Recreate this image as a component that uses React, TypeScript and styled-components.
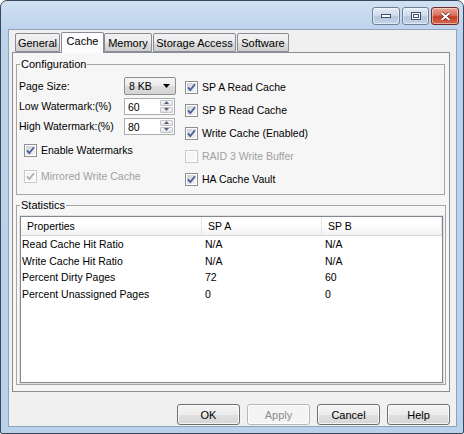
import styled, { createGlobalStyle } from "styled-components";

const GlobalStyle = createGlobalStyle`
  html, body {
    margin: 0;
    padding: 0;
    background: #ffffff;
  }
  * {
    box-sizing: border-box;
  }
`;

const Window = styled.div`
  width: 464px;
  height: 434px;
  display: flex;
  flex-direction: column;
  border: 1px solid #37475c;
  border-radius: 7px 7px 2px 2px;
  background: linear-gradient(180deg, #d0e0f2 0px, #bcd3ec 30px, #b9d1ea 100%);
  font-family: "Liberation Sans", Arial, sans-serif;
  font-size: 10.5px;
  color: #000;
  overflow: hidden;
`;

const TitleBar = styled.div`
  height: 28px;
  display: flex;
  justify-content: flex-end;
  align-items: flex-start;
  padding: 6px 4px 0 0;
`;

const TitleButton = styled.div<{ $close?: boolean; $w: number }>`
  width: ${(p) => p.$w}px;
  height: 18px;
  margin-left: 2px;
  display: flex;
  align-items: center;
  justify-content: center;
  border: 1px solid ${(p) => (p.$close ? "#6d2a26" : "#6f7f96")};
  border-radius: 3px;
  background: ${(p) =>
    p.$close
      ? "linear-gradient(180deg, #eba595 0%, #d8705c 45%, #c43c24 55%, #d86a50 100%)"
      : "linear-gradient(180deg, #e6eef8 0%, #cfdcec 45%, #b4c6dd 55%, #c7d6e9 100%)"};
  box-shadow: inset 0 0 0 1px rgba(255, 255, 255, 0.45);
`;

const Client = styled.div`
  flex: 1;
  margin: 0 6px 6px 7px;
  background: #f0f0f0;
  border: 1px solid #8ea3bc;
  display: flex;
  flex-direction: column;
  padding: 1px 6px 0 3px;
`;

const TabStrip = styled.div`
  display: flex;
  align-items: flex-end;
  height: 21px;
  padding-left: 3px;
  position: relative;
  z-index: 1;
`;

const Tab = styled.div<{ $active?: boolean; $w: number }>`
  width: ${(p) => p.$w}px;
  height: ${(p) => (p.$active ? 21 : 19)}px;
  margin-bottom: ${(p) => (p.$active ? -1 : 0)}px;
  margin-right: ${(p) => (p.$active ? 0 : 1)}px;
  padding-top: ${(p) => (p.$active ? 2 : 3)}px;
  text-align: center;
  border: 1px solid #898c95;
  border-bottom: ${(p) => (p.$active ? "none" : "1px solid #898c95")};
  border-radius: 2px 2px 0 0;
  background: ${(p) =>
    p.$active
      ? "#fcfcfe"
      : "linear-gradient(180deg, #f2f2f2 0%, #ebebeb 50%, #dddddd 51%, #cfcfcf 100%)"};
  font-size: 11px;
  white-space: nowrap;
`;

const Panel = styled.div`
  height: 340px;
  border: 1px solid #898c95;
  background: #f6f6f6;
  padding: 5px 4px 0 3px;
  display: flex;
  flex-direction: column;
`;

const Group = styled.fieldset<{ $h: number; $mt?: number }>`
  margin: ${(p) => p.$mt ?? 0}px 0 0 0;
  height: ${(p) => p.$h}px;
  border: 1px solid #a5a5a5;
  border-radius: 0;
  padding: 4px 2px 0 2px;
`;

const Legend = styled.legend`
  padding: 0 1px;
  margin-left: 1px;
  font-size: 11px;
  color: #000;
`;

const ConfigBody = styled.div`
  display: grid;
  grid-template-columns: 166px 1fr;
`;

const LeftCol = styled.div`
  display: flex;
  flex-direction: column;
`;

const FieldRow = styled.div<{ $mt?: number }>`
  display: flex;
  align-items: center;
  height: 18px;
  margin-top: ${(p) => p.$mt ?? 0}px;
`;

const FieldLabel = styled.span`
  width: 105px;
  white-space: nowrap;
`;

const Combo = styled.div`
  width: 52px;
  height: 18px;
  border: 1px solid #8e8f8f;
  border-radius: 2px;
  background: linear-gradient(180deg, #f6f6f6 0%, #eaeaea 50%, #dcdcdc 51%, #d5d5d5 100%);
  display: flex;
  align-items: center;
  justify-content: space-between;
  padding: 0 5px 0 4px;
`;

const Spin = styled.div`
  width: 51px;
  height: 17px;
  border: 1px solid #abadb3;
  background: #fff;
  display: flex;
  align-items: stretch;
`;

const SpinText = styled.span`
  flex: 1;
  padding: 2px 0 0 3px;
`;

const SpinButtons = styled.div`
  width: 15px;
  display: flex;
  flex-direction: column;
  gap: 1px;
  padding: 1px;
`;

const SpinBtn = styled.div`
  flex: 1;
  border: 1px solid #c5c5c5;
  border-radius: 1px;
  background: linear-gradient(180deg, #f5f5f5, #e3e3e3);
  display: flex;
  align-items: center;
  justify-content: center;
`;

const CheckRow = styled.div<{ $disabled?: boolean; $mt?: number; $ml?: number }>`
  display: flex;
  align-items: center;
  gap: 4px;
  height: 16px;
  margin-top: ${(p) => p.$mt ?? 0}px;
  margin-left: ${(p) => p.$ml ?? 0}px;
  color: ${(p) => (p.$disabled ? "#a0a0a0" : "#000")};
  white-space: nowrap;
`;

const RightCol = styled.div`
  display: flex;
  flex-direction: column;
  gap: 7px;
  padding-top: 5px;
`;

const List = styled.div`
  height: 167px;
  margin: 1px 0 0 1px;
  border: 1px solid #828790;
  background: #fff;
  outline: 1px solid #e0e0e0;
`;

const Table = styled.div`
  display: grid;
  grid-template-columns: 181px 120px 120px;
`;

const HeadCell = styled.div`
  height: 19px;
  padding: 3px 0 0 6px;
  background: linear-gradient(180deg, #ffffff 0%, #ffffff 40%, #f1f2f4 100%);
  border-right: 1px solid #e3e5e8;
  border-bottom: 1px solid #d5d5d5;
`;

const Cell = styled.div<{ $first?: boolean }>`
  height: 16.5px;
  padding: 2px 0 0 ${(p) => (p.$first ? 1 : 3)}px;
  white-space: nowrap;
`;

const Footer = styled.div`
  display: flex;
  justify-content: flex-end;
  gap: 7px;
  padding: 12px 0 0 0;
`;

const Button = styled.div<{ $disabled?: boolean }>`
  width: 63px;
  height: 21px;
  border: 1px solid ${(p) => (p.$disabled ? "#b5b8bb" : "#707070")};
  border-radius: 3px;
  background: ${(p) =>
    p.$disabled
      ? "#f4f4f4"
      : "linear-gradient(180deg, #f4f4f4 0%, #ececec 50%, #e0e0e0 51%, #d6d6d6 100%)"};
  box-shadow: inset 0 0 0 1px rgba(255, 255, 255, 0.7);
  color: ${(p) => (p.$disabled ? "#8c8c8c" : "#000")};
  font-size: 11px;
  display: flex;
  align-items: center;
  justify-content: center;
`;

const Check = ({ checked, disabled }: { checked: boolean; disabled?: boolean }) => (
  <svg width="13" height="13" viewBox="0 0 13 13">
    <defs>
      <linearGradient id={disabled ? "cbd" : "cb"} x1="0" y1="0" x2="1" y2="1">
        <stop offset="0" stopColor={disabled ? "#f4f4f4" : "#cbcfd5"} />
        <stop offset="1" stopColor={disabled ? "#fafafa" : "#f6f6f6"} />
      </linearGradient>
    </defs>
    <rect x="0.5" y="0.5" width="12" height="12" fill="#fff" stroke={disabled ? "#c9c9c9" : "#8e8f8f"} />
    <rect x="2" y="2" width="9" height="9" fill={`url(#${disabled ? "cbd" : "cb"})`} />
    {checked && (
      <path
        d="M3 6.3 L5.3 9 L10 3.2"
        fill="none"
        stroke={disabled ? "#b0b0b0" : "#4a5f97"}
        strokeWidth="1.8"
      />
    )}
  </svg>
);

const Arrow = ({ up }: { up?: boolean }) => (
  <svg width="5" height="3" viewBox="0 0 5 3">
    <path d={up ? "M0 3 L2.5 0 L5 3 Z" : "M0 0 L2.5 3 L5 0 Z"} fill="#4d6185" />
  </svg>
);

const Spinner = ({ value }: { value: string }) => (
  <Spin>
    <SpinText>{value}</SpinText>
    <SpinButtons>
      <SpinBtn>
        <Arrow up />
      </SpinBtn>
      <SpinBtn>
        <Arrow />
      </SpinBtn>
    </SpinButtons>
  </Spin>
);

const tabs = [
  { label: "General", w: 45 },
  { label: "Cache", w: 43, active: true },
  { label: "Memory", w: 48 },
  { label: "Storage Access", w: 83 },
  { label: "Software", w: 52 },
];

const rows = [
  ["Read Cache Hit Ratio", "N/A", "N/A"],
  ["Write Cache Hit Ratio", "N/A", "N/A"],
  ["Percent Dirty Pages", "72", "60"],
  ["Percent Unassigned Pages", "0", "0"],
];

const rightChecks = [
  { label: "SP A Read Cache", checked: true },
  { label: "SP B Read Cache", checked: true },
  { label: "Write Cache (Enabled)", checked: true },
  { label: "RAID 3 Write Buffer", checked: false, disabled: true },
  { label: "HA Cache Vault", checked: true },
];

const App = () => {
  return (
    <>
      <GlobalStyle />
      <Window>
        <TitleBar>
          <TitleButton $w={28}>
            <svg width="10" height="4" viewBox="0 0 10 4">
              <rect x="0.5" y="0.5" width="9" height="3" fill="#fff" stroke="#3d4f6a" />
            </svg>
          </TitleButton>
          <TitleButton $w={27}>
            <svg width="10" height="8" viewBox="0 0 10 8">
              <rect x="0.5" y="0.5" width="9" height="7" fill="#fff" stroke="#3d4f6a" />
              <rect x="2.5" y="2.5" width="5" height="3" fill="none" stroke="#3d4f6a" />
            </svg>
          </TitleButton>
          <TitleButton $w={28} $close>
            <svg width="11" height="9" viewBox="0 0 11 9">
              <path d="M1.5 1 L9.5 8 M9.5 1 L1.5 8" stroke="#5a1a14" strokeWidth="3.2" />
              <path d="M1.5 1 L9.5 8 M9.5 1 L1.5 8" stroke="#fff" strokeWidth="2" />
            </svg>
          </TitleButton>
        </TitleBar>
        <Client>
          <TabStrip>
            {tabs.map((t) => (
              <Tab key={t.label} $w={t.w} $active={t.active}>
                {t.label}
              </Tab>
            ))}
          </TabStrip>
          <Panel>
            <Group $h={137}>
              <Legend>Configuration</Legend>
              <ConfigBody>
                <LeftCol>
                  <FieldRow $mt={3}>
                    <FieldLabel>Page Size:</FieldLabel>
                    <Combo>
                      <span>8 KB</span>
                      <svg width="7" height="4" viewBox="0 0 7 4">
                        <path d="M0 0 L7 0 L3.5 4 Z" fill="#000" />
                      </svg>
                    </Combo>
                  </FieldRow>
                  <FieldRow $mt={2}>
                    <FieldLabel>Low Watermark:(%)</FieldLabel>
                    <Spinner value="60" />
                  </FieldRow>
                  <FieldRow $mt={2}>
                    <FieldLabel>High Watermark:(%)</FieldLabel>
                    <Spinner value="80" />
                  </FieldRow>
                  <CheckRow $mt={7} $ml={5}>
                    <Check checked />
                    <span>Enable Watermarks</span>
                  </CheckRow>
                  <CheckRow $mt={10} $ml={5} $disabled>
                    <Check checked disabled />
                    <span>Mirrored Write Cache</span>
                  </CheckRow>
                </LeftCol>
                <RightCol>
                  {rightChecks.map((c) => (
                    <CheckRow key={c.label} $disabled={c.disabled}>
                      <Check checked={c.checked} disabled={c.disabled} />
                      <span>{c.label}</span>
                    </CheckRow>
                  ))}
                </RightCol>
              </ConfigBody>
            </Group>
            <Group $h={186} $mt={4}>
              <Legend>Statistics</Legend>
              <List>
                <Table>
                  <HeadCell>Properties</HeadCell>
                  <HeadCell>SP A</HeadCell>
                  <HeadCell>SP B</HeadCell>
                  {rows.map((r) =>
                    r.map((v, i) => (
                      <Cell key={r[0] + i} $first={i === 0}>
                        {v}
                      </Cell>
                    ))
                  )}
                </Table>
              </List>
            </Group>
          </Panel>
          <Footer>
            <Button>OK</Button>
            <Button $disabled>Apply</Button>
            <Button>Cancel</Button>
            <Button>Help</Button>
          </Footer>
        </Client>
      </Window>
    </>
  );
};

export default App;
